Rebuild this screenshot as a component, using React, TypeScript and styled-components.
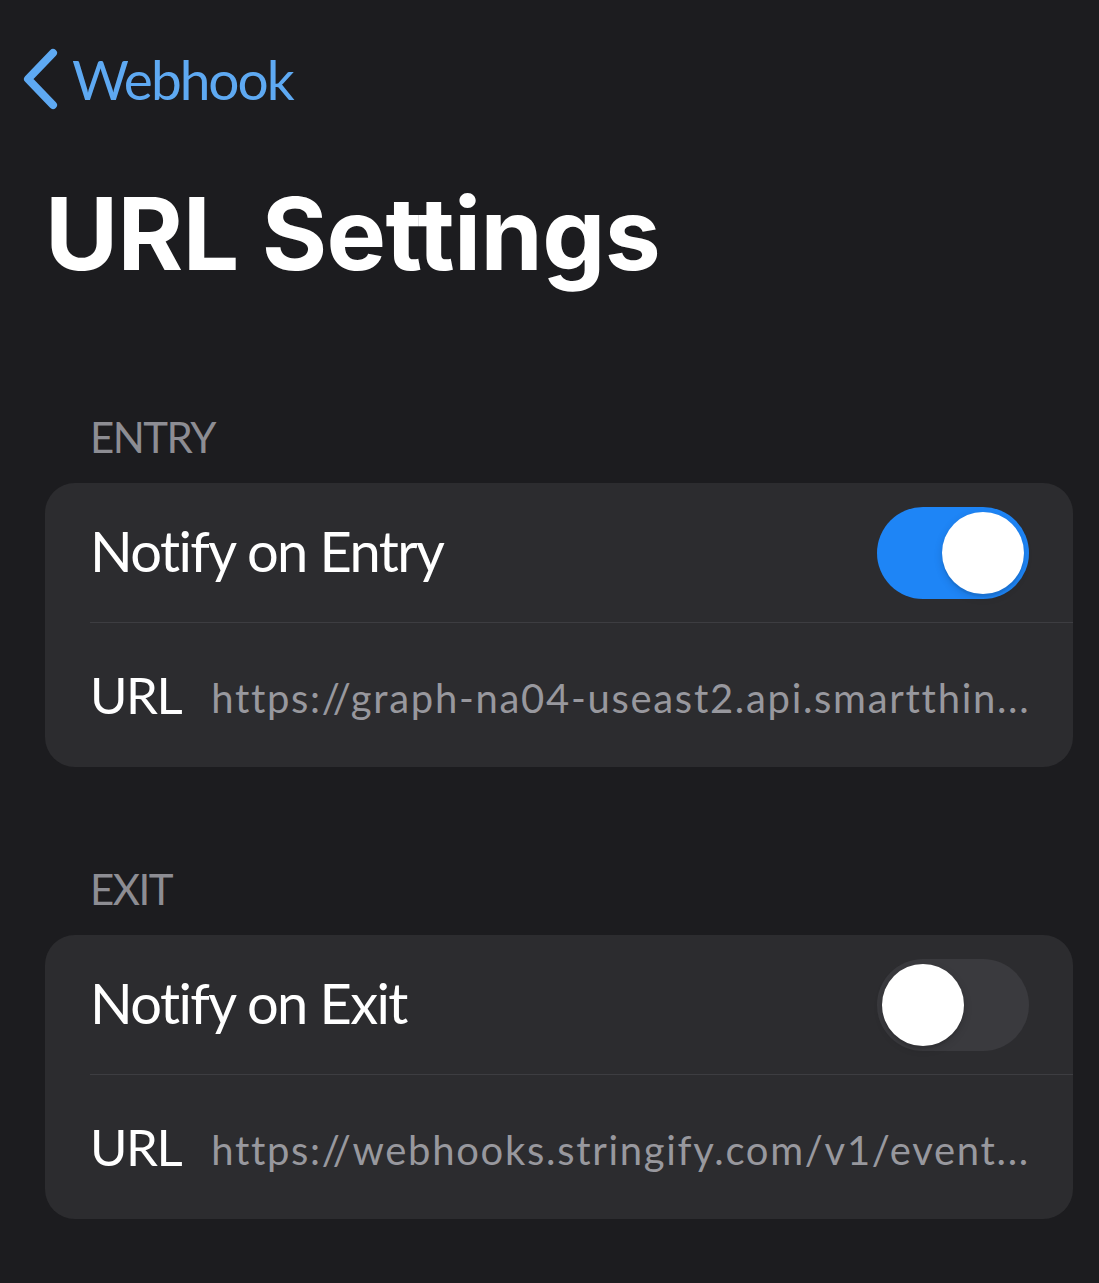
import React from "react";
import styled, { createGlobalStyle } from "styled-components";

const Global = createGlobalStyle`
  html, body { margin: 0; padding: 0; background: #1c1c1f; }
  body { font-family: "Lato", "Noto Sans", sans-serif; -webkit-font-smoothing: antialiased; }
`;

const Page = styled.div`
  min-height: 1283px;
  background: #1c1c1f;
  padding: 0 26px 0 45px;
  box-sizing: border-box;
`;

const NavBar = styled.div`
  height: 158px;
  display: flex;
  align-items: center;
  margin-left: -24px;
  gap: 11px;
`;

const BackLabel = styled.span`
  font-family: "Lato", sans-serif;
  font-size: 55px;
  line-height: 1;
  letter-spacing: -2px;
  color: #5ea9f2;
`;

const Title = styled.h1`
  margin: 16px 0 0 0;
  font-family: "Inter", "Roboto", sans-serif;
  font-weight: 700;
  font-size: 100px;
  line-height: 120px;
  letter-spacing: -0.6px;
  color: #ffffff;
`;

const SectionHeader = styled.div<{ $top: number }>`
  margin-top: ${(p) => p.$top}px;
  padding: 0 0 21px 45px;
  font-size: 42px;
  line-height: 50px;
  color: #8d8d93;
  letter-spacing: -1.5px;
`;

const Card = styled.div`
  background: #2c2c2f;
  border-radius: 30px;
  overflow: hidden;
`;

const Row = styled.div<{ $h: number; $divider?: boolean }>`
  height: ${(p) => p.$h}px;
  display: flex;
  align-items: center;
  margin-left: 45px;
  padding-right: 45px;
  box-sizing: border-box;
  border-bottom: ${(p) => (p.$divider ? "1px solid #3d3d41" : "none")};
`;

const RowLabel = styled.span`
  flex: 1;
  font-size: 56px;
  line-height: 1.2;
  letter-spacing: -1.6px;
  color: #ffffff;
  margin-top: -4px;
`;

const UrlLabel = styled.span`
  font-size: 51px;
  line-height: 1.2;
  letter-spacing: -1.5px;
  color: #ffffff;
  flex: none;
  margin-right: 30px;
`;

const UrlValue = styled.span`
  flex: 1;
  min-width: 0;
  font-size: 40px;
  line-height: 1.2;
  letter-spacing: 1.7px;
  color: #98989e;
  white-space: nowrap;
  margin-top: 6px;
`;

const Track = styled.div<{ $on: boolean }>`
  width: 152px;
  height: 92px;
  border-radius: 46px;
  background: ${(p) => (p.$on ? "#1e85f6" : "#3a3a3e")};
  display: flex;
  align-items: center;
  justify-content: ${(p) => (p.$on ? "flex-end" : "flex-start")};
  padding: 0 5px;
  box-sizing: border-box;
  flex: none;
  margin-right: -1px;
`;

const Knob = styled.div`
  width: 82px;
  height: 82px;
  border-radius: 50%;
  background: #ffffff;
  box-shadow: 0 3px 8px rgba(0, 0, 0, 0.15), 0 3px 1px rgba(0, 0, 0, 0.06);
`;

const Chevron = () => (
  <svg width="40" height="64" viewBox="0 0 40 64" fill="none">
    <polyline
      points="32,6 7,32 32,58"
      stroke="#5ea9f2"
      strokeWidth="8"
      strokeLinecap="round"
      strokeLinejoin="round"
    />
  </svg>
);

const Toggle = ({ on }: { on: boolean }) => (
  <Track $on={on}>
    <Knob />
  </Track>
);

const Section = ({
  title,
  top,
  label,
  on,
  url,
}: {
  title: string;
  top: number;
  label: string;
  on: boolean;
  url: string;
}) => (
  <>
    <SectionHeader $top={top}>{title}</SectionHeader>
    <Card>
      <Row $h={140} $divider>
        <RowLabel>{label}</RowLabel>
        <Toggle on={on} />
      </Row>
      <Row $h={144}>
        <UrlLabel>URL</UrlLabel>
        <UrlValue>{url}</UrlValue>
      </Row>
    </Card>
  </>
);

export default function App() {
  return (
    <>
      <Global />
      <Page>
        <NavBar>
          <Chevron />
          <BackLabel>Webhook</BackLabel>
        </NavBar>
        <Title>URL Settings</Title>
        <Section
          title="ENTRY"
          top={118}
          label="Notify on Entry"
          on={true}
          url="https://graph-na04-useast2.api.smartthin..."
        />
        <Section
          title="EXIT"
          top={97}
          label="Notify on Exit"
          on={false}
          url="https://webhooks.stringify.com/v1/event..."
        />
      </Page>
    </>
  );
}
